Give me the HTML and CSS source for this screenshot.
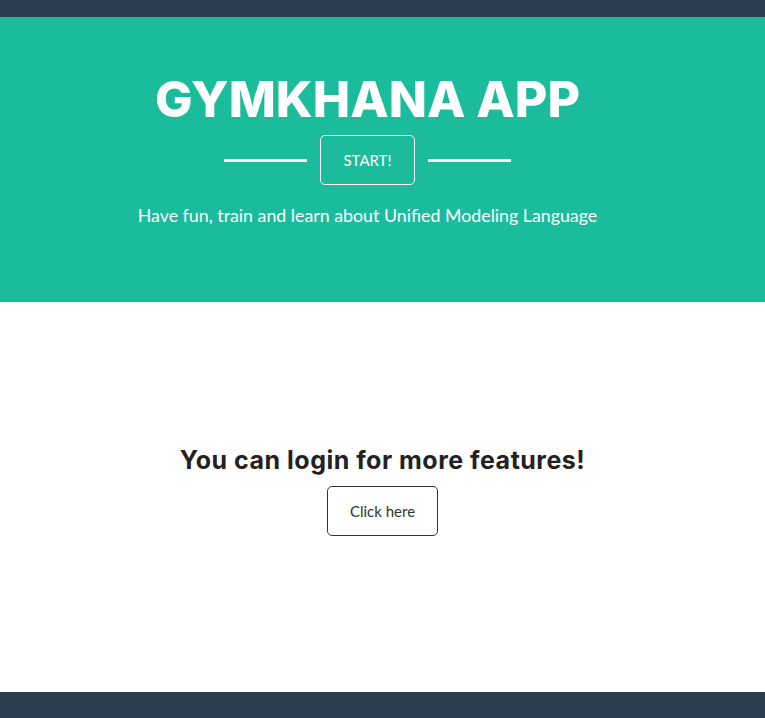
FILE: index.html
```html
<!DOCTYPE html>
<html>
<head>
<meta charset="utf-8">
<link rel="stylesheet" href="styles.css">
</head>
<body>
<div class="topbar"></div>
<header class="hero">
  <h1 class="title">GYMKHANA APP</h1>
  <div class="start-row">
    <span class="line"></span>
    <a class="btn-start">START!</a>
    <span class="line"></span>
  </div>
  <p class="subtitle">Have fun, train and learn about Unified Modeling Language</p>
</header>
<main class="login">
  <h2 class="login-title">You can login for more features!</h2>
  <a class="btn-click">Click here</a>
</main>
<footer class="footer"></footer>
</body>
</html>
```
FILE: styles.css
```css
html, body { margin: 0; padding: 0; }
body { font-family: Lato, "Open Sans", sans-serif; background: #fff; }
.topbar { height: 17px; background: #2c3e50; }
.hero {
  height: 285px;
  background: #1abc9c;
  color: #fff;
  display: flex;
  flex-direction: column;
  align-items: center;
  padding-right: 30px;
  box-sizing: border-box;
}
.title {
  margin: 53px 0 0;
  font-family: Inter, "Open Sans", sans-serif;
  font-weight: 800;
  font-size: 50px;
  line-height: 58px;
  letter-spacing: 0;
}
.start-row { display: flex; align-items: center; gap: 13px; margin-top: 7px; }
.line { width: 83px; height: 3px; background: #fff; }
.btn-start {
  width: 95px; height: 50px; box-sizing: border-box;
  border: 1px solid #fff; border-radius: 5px;
  display: flex; align-items: center; justify-content: center;
  font-size: 15px;
}
.subtitle { margin: 19px 0 0; font-size: 17.8px; line-height: 22px; }
.login {
  height: 390px;
  display: flex; flex-direction: column; align-items: center;
}
.login-title {
  margin: 143px 0 0;
  font-family: Inter, "Open Sans", sans-serif;
  font-weight: 700;
  font-size: 25px;
  letter-spacing: 0.5px;
  line-height: 30px;
  color: #222;
}
.btn-click {
  margin-top: 11px;
  width: 111px; height: 50px; box-sizing: border-box;
  border: 1px solid #333; border-radius: 5px;
  display: flex; align-items: center; justify-content: center;
  font-size: 15px; color: #333;
}
.footer { height: 26px; background: #2c3e50; }
```
